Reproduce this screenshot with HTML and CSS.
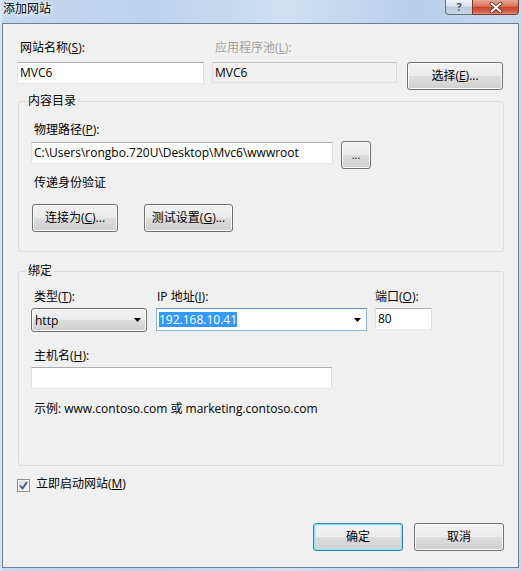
FILE: index.html
```html
<!DOCTYPE html>
<html lang="zh-CN">
<head>
<meta charset="utf-8">
<title>添加网站</title>
<link rel="stylesheet" href="styles.css">
</head>
<body>
<div class="window">
  <div class="titlebar">
    <span class="title">添加网站</span>
    <div class="caption-btns">
      <div class="cap help">?</div>
      <div class="cap close">
        <svg width="14" height="11" viewBox="0 0 14 11">
          <path d="M2.5 1.5 L11.5 9.5 M11.5 1.5 L2.5 9.5" stroke="#5a2418" stroke-width="3.6" stroke-linecap="round"/>
          <path d="M2.5 1.5 L11.5 9.5 M11.5 1.5 L2.5 9.5" stroke="#ffffff" stroke-width="2" stroke-linecap="round"/>
        </svg>
      </div>
    </div>
  </div>
  <div class="client">
    <div class="top-row">
      <div class="field site-name">
        <div class="lbl">网站名称(<u>S</u>):</div>
        <div class="input">MVC6</div>
      </div>
      <div class="field app-pool">
        <div class="lbl disabled">应用程序池(<u>L</u>):</div>
        <div class="input readonly">MVC6</div>
      </div>
      <div class="btn select-btn">选择(<u>E</u>)...</div>
    </div>

    <fieldset class="group content-group">
      <legend>内容目录</legend>
      <div class="group-body g1-body">
        <div class="lbl indent">物理路径(<u>P</u>):</div>
        <div class="path-row">
          <div class="input path-input">C:\Users\rongbo.720U\Desktop\Mvc6\wwwroot</div>
          <div class="btn dots-btn">...</div>
        </div>
        <div class="lbl indent auth-lbl">传递身份验证</div>
        <div class="auth-row">
          <div class="btn connect-btn">连接为(<u>C</u>)...</div>
          <div class="btn test-btn">测试设置(<u>G</u>)...</div>
        </div>
      </div>
    </fieldset>

    <fieldset class="group binding-group">
      <legend>绑定</legend>
      <div class="group-body g2-body">
        <div class="bind-row">
          <div class="field type-field">
            <div class="lbl indent">类型(<u>T</u>):</div>
            <div class="combo-btn">
              <span>http</span>
              <svg class="arrow" width="7" height="4" viewBox="0 0 7 4"><path d="M0 0H7L3.5 4Z" fill="#000"/></svg>
            </div>
          </div>
          <div class="field ip-field">
            <div class="lbl ip-lbl">IP 地址(<u>I</u>):</div>
            <div class="combo-edit">
              <span class="sel">192.168.10.41</span>
              <svg class="arrow" width="7" height="4" viewBox="0 0 7 4"><path d="M0 0H7L3.5 4Z" fill="#000"/></svg>
            </div>
          </div>
          <div class="field port-field">
            <div class="lbl">端口(<u>O</u>):</div>
            <div class="input port-input">80</div>
          </div>
        </div>
        <div class="lbl indent host-lbl">主机名(<u>H</u>):</div>
        <div class="input host-input"></div>
        <div class="lbl indent example">示例: www.contoso.com 或 marketing.contoso.com</div>
      </div>
    </fieldset>

    <div class="check-row">
      <div class="checkbox">
        <svg width="9" height="9" viewBox="0 0 9 9"><path d="M1 4.5 L3.5 7.5 L8 1" fill="none" stroke="#3f5684" stroke-width="1.8"/></svg>
      </div>
      <span>立即启动网站(<u>M</u>)</span>
    </div>

    <div class="footer">
      <div class="btn dlg-btn default">确定</div>
      <div class="btn dlg-btn">取消</div>
    </div>
  </div>
</div>
</body>
</html>
```

FILE: styles.css
```css
* { box-sizing: border-box; }
html, body { margin: 0; padding: 0; }
body {
  width: 522px;
  height: 571px;
  overflow: hidden;
  font-family: "Open Sans", "Noto Sans CJK SC", sans-serif;
  font-size: 12px;
  color: #000;
}
u { text-decoration: underline; text-underline-offset: 1px; }

.window {
  width: 522px;
  height: 571px;
  display: flex;
  flex-direction: column;
  padding: 0 3px 3px 2px;
  background: linear-gradient(to right, #dbe8f5 0px, #c3d7ed 4px, #bcd3ec 30%, #cfe0f2 55%, #b7cfea 80%, #c6daef 100%);
}

.titlebar {
  height: 23px;
  flex: none;
  display: flex;
  justify-content: space-between;
  align-items: flex-start;
}
.title {
  padding: 1px 0 0 1px;
  line-height: 16px;
  font-size: 12px;
  text-shadow: 0 0 4px #fff, 0 0 6px #fff;
}
.caption-btns { display: flex; }
.cap {
  height: 15px;
  border: 1px solid #5f7286;
  border-top: none;
  display: flex;
  align-items: center;
  justify-content: center;
}
.help {
  width: 27px;
  border-radius: 0 0 0 4px;
  border-right: none;
  background: linear-gradient(#eef3f9 0%, #d7e2ee 45%, #b9c9dc 50%, #c8d6e6 100%);
  color: #42556b;
  font-weight: bold;
  font-size: 11px;
  line-height: 14px;
  text-shadow: 0 0 2px #fff;
}
.close {
  width: 47px;
  border-color: #7b3a2e;
  border-radius: 0 0 4px 0;
  background: linear-gradient(#e9a797 0%, #d9735e 45%, #c6442b 50%, #d2604a 85%, #e1937f 100%);
}

.client {
  flex: 1;
  background: #f0f0f0;
  border: 1px solid #6b7f96;
  padding: 16px 14px 0 14px;
}

.lbl { line-height: 16px; white-space: nowrap; }
.lbl.disabled { color: #a0a0a0; }
.indent { padding-left: 3px; }

.input {
  height: 22px;
  background: #fff;
  border: 1px solid;
  border-color: #abadb3 #dbdfe6 #e3e9ef #e2e3ea;
  padding: 0 2px;
  line-height: 20px;
  white-space: nowrap;
  overflow: hidden;
}
.input.readonly {
  background: #f0f0f0;
  border-color: #c8c8c8 #dcdcdc #e2e2e2 #dcdcdc;
}

.btn {
  height: 28px;
  border: 1px solid #707070;
  border-radius: 3px;
  background: linear-gradient(#f2f2f2 0%, #ebebeb 50%, #dddddd 51%, #cfcfcf 100%);
  box-shadow: inset 0 0 0 1px #fbfbfb;
  display: flex;
  align-items: center;
  justify-content: center;
  white-space: nowrap;
  line-height: 16px;
}

/* top row */
.top-row { display: flex; align-items: flex-start; }
.field { display: flex; flex-direction: column; }
.site-name { width: 187px; }
.site-name .lbl { padding-left: 3px; }
.site-name .input { margin-top: 6px; }
.app-pool { width: 185px; margin-left: 8px; }
.app-pool .lbl { padding-left: 3px; }
.app-pool .input { margin-top: 6px; height: 21px; line-height: 19px; }
.select-btn { width: 96px; margin-left: 10px; margin-top: 22px; }

/* group boxes */
.group {
  margin: 3px 0 0 1px;
  padding: 0;
  min-width: 0;
  border: 1px solid #d5dfe5;
  border-radius: 3px;
}
.group legend {
  margin-left: 7px;
  padding: 0 2px;
  line-height: 16px;
}
.group-body { padding-left: 12px; }

.g1-body { padding-top: 13px; padding-bottom: 19px; }
.path-row { display: flex; align-items: flex-start; margin-top: 4px; }
.path-input { width: 302px; }
.dots-btn { width: 30px; margin-left: 8px; margin-top: -1px; font-size: 11px; }
.auth-lbl { margin-top: 6px; }
.auth-row { display: flex; margin-top: 13px; padding-left: 1px; }
.connect-btn { width: 86px; }
.test-btn { width: 89px; margin-left: 26px; }

.binding-group { margin-top: 11px; }
.g2-body { padding-top: 10px; padding-bottom: 48px; }
.bind-row { display: flex; align-items: flex-start; }
.bind-row .lbl { margin-bottom: 3px; }
.type-field { width: 116px; }
.ip-field { width: 211px; margin-left: 9px; }
.ip-lbl { padding-left: 1px; }
.port-field { width: 57px; margin-left: 8px; }

.combo-btn {
  height: 24px;
  border: 1px solid #707070;
  border-radius: 3px;
  background: linear-gradient(#f2f2f2 0%, #ebebeb 50%, #dddddd 51%, #cfcfcf 100%);
  box-shadow: inset 0 0 0 1px #fbfbfb;
  display: flex;
  align-items: center;
  justify-content: space-between;
  padding: 0 5px 0 3px;
}
.combo-edit {
  height: 23px;
  background: #fff;
  border: 1px solid #8fb8e0;
  border-top-color: #5d93c7;
  display: flex;
  align-items: center;
  justify-content: space-between;
  padding: 0 5px 0 2px;
}
.sel {
  background: #3399ff;
  color: #fff;
  line-height: 15px;
}
.arrow { flex: none; }
.port-input { width: 57px; }

.host-lbl { margin-top: 16px; }
.host-input { width: 301px; margin-top: 3px; }
.example { margin-top: 12px; }

.check-row {
  display: flex;
  align-items: flex-start;
  margin-top: 10px;
  line-height: 16px;
}
.checkbox {
  width: 13px;
  height: 13px;
  margin-top: 3px;
  margin-right: 6px;
  border: 1px solid #8e8f8f;
  background: linear-gradient(135deg, #dadbdc, #f6f6f6);
  box-shadow: inset 0 0 0 1px #f4f4f4;
  display: flex;
  align-items: center;
  justify-content: center;
}

.footer {
  display: flex;
  justify-content: flex-end;
  gap: 11px;
  margin-top: 31px;
}
.dlg-btn { width: 90px; }
.dlg-btn.default {
  border-color: #3c7fb1;
  box-shadow: inset 0 0 0 1px #7fe3fb, inset 0 0 0 2px rgba(180, 238, 252, 0.6);
}
```
